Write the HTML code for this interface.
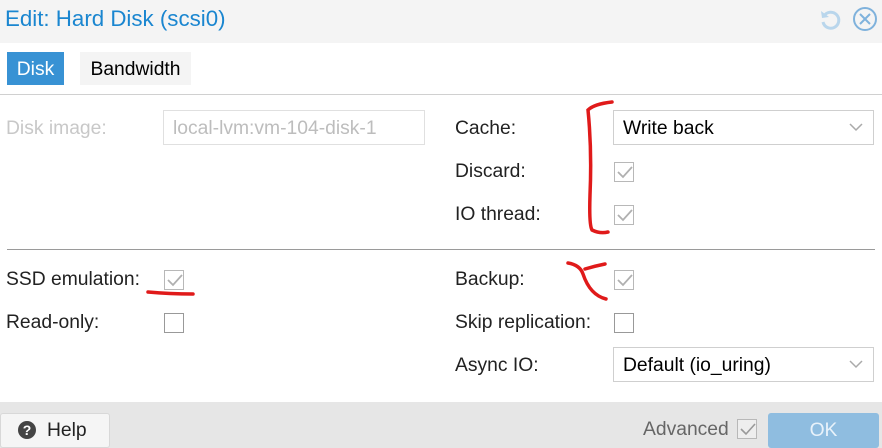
<!DOCTYPE html>
<html><head><style>
*{margin:0;padding:0;box-sizing:border-box}
body{width:882px;height:448px;position:relative;background:#fff;font-family:"Liberation Sans",Arial,sans-serif;font-size:19.3px;color:#222;overflow:hidden}
.a{position:absolute}
.lbl{position:absolute;line-height:22px;margin-top:1px}
.cb{position:absolute;width:20px;height:20px;border:1px solid #b8b8b8;background:#fff}
.cb svg{position:absolute;left:1px;top:1px}
.sel{position:absolute;border:1px solid #cfcfcf;background:#fff;height:35px;padding-left:9px;line-height:35px;color:#000}
</style></head><body>
<div class="a" style="left:0;top:0;width:882px;height:43px;background:#f4f4f4"></div>
<div class="a" style="left:5px;top:6px;font-size:22.3px;color:#1a86d0;line-height:26px">Edit: Hard Disk (scsi0)</div>
<svg class="a" style="left:818px;top:7px" width="26" height="26" viewBox="0 0 26 26"><path d="M6 9 A8 8 0 1 1 5 15" fill="none" stroke="#b9d6ec" stroke-width="3"/><path d="M3 4 L4 11 L11 10" fill="#b9d6ec"/></svg>
<svg class="a" style="left:852px;top:6px" width="26" height="26" viewBox="0 0 26 26"><circle cx="13" cy="13" r="11" fill="none" stroke="#7fb2dc" stroke-width="2"/><path d="M8 8L18 18M18 8L8 18" stroke="#7fb2dc" stroke-width="2"/></svg>
<div class="a" style="left:7px;top:52px;width:57px;height:33px;background:#3892d4;color:#fff;line-height:35px;text-align:center">Disk</div>
<div class="a" style="left:80px;top:52px;width:111px;height:33px;background:#f4f4f4;color:#000;line-height:35px;text-align:center">Bandwidth</div>
<div class="a" style="left:0;top:94px;width:882px;height:1px;background:#d0d0d0"></div>

<div class="lbl" style="left:6px;top:117px;color:#c8c8c8">Disk image:</div>
<div class="a" style="left:163px;top:110px;width:262px;height:35px;border:1px solid #e0e0e0;color:#bdbdbd;padding-left:9px;line-height:35px">local-lvm:vm-104-disk-1</div>

<div class="lbl" style="left:455px;top:117px">Cache:</div>
<div class="sel" style="left:613px;top:110px;width:261px">Write back<svg class="a" style="right:10px;top:12px" width="14" height="9"><path d="M1 1L7 7L13 1" fill="none" stroke="#aaa" stroke-width="1.5"/></svg></div>
<div class="lbl" style="left:455px;top:160px">Discard:</div>
<div class="lbl" style="left:455px;top:203px">IO thread:</div>
<div class="a" style="left:7px;top:249px;width:868px;height:1px;background:#9a9a9a"></div>
<div class="lbl" style="left:6px;top:268px">SSD emulation:</div>
<div class="lbl" style="left:6px;top:311px">Read-only:</div>
<div class="lbl" style="left:455px;top:268px">Backup:</div>
<div class="lbl" style="left:455px;top:311px">Skip replication:</div>
<div class="lbl" style="left:455px;top:354px">Async IO:</div>
<div class="sel" style="left:613px;top:347px;width:261px">Default (io_uring)<svg class="a" style="right:10px;top:12px" width="14" height="9"><path d="M1 1L7 7L13 1" fill="none" stroke="#aaa" stroke-width="1.5"/></svg></div>

<div class="cb" style="left:614px;top:162px"><svg width="17" height="17"><path d="M2 8L7 13L16 3" fill="none" stroke="#b0b0b0" stroke-width="1.8"/></svg></div>
<div class="cb" style="left:614px;top:205px"><svg width="17" height="17"><path d="M2 8L7 13L16 3" fill="none" stroke="#b0b0b0" stroke-width="1.8"/></svg></div>
<div class="cb" style="left:164px;top:270px"><svg width="17" height="17"><path d="M2 8L7 13L16 3" fill="none" stroke="#b0b0b0" stroke-width="1.8"/></svg></div>
<div class="cb" style="left:614px;top:270px"><svg width="17" height="17"><path d="M2 8L7 13L16 3" fill="none" stroke="#b0b0b0" stroke-width="1.8"/></svg></div>
<div class="cb" style="left:164px;top:313px;border-color:#999"></div>
<div class="cb" style="left:614px;top:313px;border-color:#999"></div>

<svg class="a" style="left:0;top:0" width="882" height="448"><g fill="none" stroke="#e01a1a" stroke-width="3.5" stroke-linecap="round">
<path d="M612 102 Q594 104 588 110 Q592 150 590 195 Q589 225 592 230 Q600 234 608 232"/>
<path d="M568 263 Q580 265 583 274 Q590 295 606 299"/>
<path d="M585 269 Q595 266 605 264"/>
<path d="M148 292 Q170 294 193 294"/>
</g></svg>

<div class="a" style="left:0;top:402px;width:882px;height:46px;background:#e6e6e6"></div>
<div class="a" style="left:0;top:413px;width:110px;height:35px;background:#f5f5f5;border:1px solid #d8d8d8;border-radius:3px"></div>
<svg class="a" style="left:17px;top:420px" width="20" height="20"><circle cx="10" cy="10" r="9" fill="#444"/><text x="10" y="15" font-family="Liberation Sans" font-weight="bold" font-size="14" fill="#fff" text-anchor="middle">?</text></svg>
<div class="lbl" style="left:47px;top:419px;color:#222">Help</div>
<div class="lbl" style="left:643px;top:418px;color:#666">Advanced</div>
<div class="cb" style="left:737px;top:419px;background:#eee"><svg width="17" height="17"><path d="M2 8L7 13L16 3" fill="none" stroke="#999" stroke-width="1.6"/></svg></div>
<div class="a" style="left:768px;top:413px;width:111px;height:35px;background:#8fbde0;border-radius:3px;color:#e8f2fa;line-height:35px;text-align:center">OK</div>
</body></html>
